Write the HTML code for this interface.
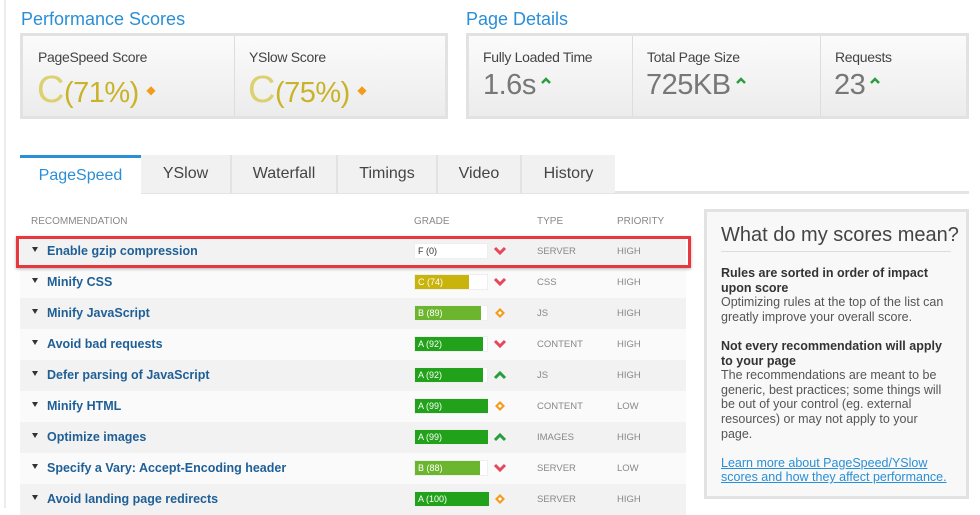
<!DOCTYPE html>
<html><head><meta charset="utf-8"><style>
*{box-sizing:border-box;margin:0;padding:0}
body{width:980px;height:508px;background:#fff;font-family:"Liberation Sans",sans-serif;position:relative;overflow:hidden;color:#444}
.abs{position:absolute}
.h{color:#2a8fd6;font-size:18px;top:9px}
.box{border:3px solid #e2e2e2;background:linear-gradient(#fbfbfb,#ececec);top:33px;height:86px}
.cell{position:absolute;top:0;bottom:0;border-left:1px solid #ddd}
.lab{position:absolute;top:13px;font-size:14px;color:#444;letter-spacing:-0.3px;white-space:nowrap}
.val{position:absolute;top:33px;font-size:29px;color:#777;letter-spacing:-0.5px;white-space:nowrap}
.tab{position:absolute;top:155px;height:38px;background:#f1f1f1;border-right:2px solid #e3e3e3;font-size:16px;color:#444;text-align:center;line-height:38px}
.row{position:absolute;left:20px;width:666px;height:31px}
.row .n{position:absolute;left:27px;top:8px;font-size:12.5px;font-weight:bold;color:#1f5f96}
.row .t{position:absolute;left:12px;top:11px;width:0;height:0;border-left:3px solid transparent;border-right:3px solid transparent;border-top:5px solid #333}
.g{position:absolute;left:394px;top:7px;width:74px;height:16px;background:#fff;border:1px solid #eee}
.g i{position:absolute;left:0;top:0;bottom:0;display:block}
.g span{position:absolute;left:3px;top:2px;font-size:9px;color:#fff;font-style:normal}
.ty,.pr{position:absolute;top:10px;font-size:9.5px;color:#888}
.ty{left:517px}.pr{left:597px}
.ic{position:absolute;left:473px;top:9px}
.side{font-size:12.5px;color:#555;line-height:14.6px}
.up{display:inline-block;vertical-align:10px;margin-left:4px}
</style></head><body>
<div class="abs" style="left:4px;top:0;width:2px;height:508px;background:#ececec"></div>
<div class="abs h" style="left:21px">Performance Scores</div>
<div class="abs h" style="left:466px">Page Details</div>
<div class="abs box" style="left:20px;width:428px">
 <div class="lab" style="left:15px">PageSpeed Score</div>
 <div class="val" style="left:14px;color:#c8b32a"><span style="font-size:38px;color:#dcd170">C</span>(71%) <span style="color:#f29b1d;font-size:12px;vertical-align:8px">◆</span></div>
 <div class="cell" style="left:211px"><div class="lab" style="left:14px">YSlow Score</div>
 <div class="val" style="left:13px;color:#c8b32a"><span style="font-size:38px;color:#dcd170">C</span>(75%) <span style="color:#f29b1d;font-size:12px;vertical-align:8px">◆</span></div></div>
</div>
<div class="abs box" style="left:466px;width:503px">
 <div class="lab" style="left:14px">Fully Loaded Time</div>
 <div class="val" style="left:14px">1.6s<svg class="up" width="12" height="8"><path d="M2 7l4-4 4 4" stroke="#2a9d3c" stroke-width="2.5" fill="none"/></svg></div>
 <div class="cell" style="left:163px"><div class="lab" style="left:14px">Total Page Size</div><div class="val" style="left:13px">725KB<svg class="up" width="12" height="8"><path d="M2 7l4-4 4 4" stroke="#2a9d3c" stroke-width="2.5" fill="none"/></svg></div></div>
 <div class="cell" style="left:351px"><div class="lab" style="left:14px">Requests</div><div class="val" style="left:13px">23<svg class="up" width="12" height="8"><path d="M2 7l4-4 4 4" stroke="#2a9d3c" stroke-width="2.5" fill="none"/></svg></div></div>
</div>
<div class="abs" style="left:20px;top:191px;width:949px;height:3px;background:#e5e5e5"></div>
<div class="tab" style="left:20px;width:121px;background:#fff;border-top:3px solid #2a8fd6;border-right:none;color:#2a8fd6;line-height:36px;height:40px">PageSpeed</div>
<div class="tab" style="left:141px;width:91px">YSlow</div>
<div class="tab" style="left:232px;width:106px">Waterfall</div>
<div class="tab" style="left:338px;width:100px">Timings</div>
<div class="tab" style="left:438px;width:84px">Video</div>
<div class="tab" style="left:522px;width:93px;border-right:none">History</div>
<div class="abs" style="left:31px;top:216px;font-size:10px;color:#888">RECOMMENDATION</div>
<div class="abs" style="left:414px;top:216px;font-size:10px;color:#888">GRADE</div>
<div class="abs" style="left:537px;top:216px;font-size:10px;color:#888">TYPE</div>
<div class="abs" style="left:617px;top:216px;font-size:10px;color:#888">PRIORITY</div>

<div class="row" style="top:236px;background:#f2f2f2"><b class="t"></b><span class="n">Enable gzip compression</span><div class="g"><span style="color:#333">F (0)</span></div><svg class="ic" width="14" height="12"><path d="M2 3l5 5 5-5" stroke="#e5485a" stroke-width="3" fill="none"/></svg><span class="ty">SERVER</span><span class="pr">HIGH</span></div>
<div class="row" style="top:267px;background:#fafafa"><b class="t"></b><span class="n">Minify CSS</span><div class="g"><i style="width:54px;background:#c9b40c"></i><span>C (74)</span></div><svg class="ic" width="14" height="12"><path d="M2 3l5 5 5-5" stroke="#e5485a" stroke-width="3" fill="none"/></svg><span class="ty">CSS</span><span class="pr">HIGH</span></div>
<div class="row" style="top:298px;background:#f2f2f2"><b class="t"></b><span class="n">Minify JavaScript</span><div class="g"><i style="width:66px;background:#6cb52e"></i><span>B (89)</span></div><svg class="ic" width="14" height="12"><path d="M7 1l5 5-5 5-5-5z" fill="#f29b1d"/><path d="M7 4l2 2-2 2-2-2z" fill="#fff"/></svg><span class="ty">JS</span><span class="pr">HIGH</span></div>
<div class="row" style="top:329px;background:#fafafa"><b class="t"></b><span class="n">Avoid bad requests</span><div class="g"><i style="width:68px;background:#22a21a"></i><span>A (92)</span></div><svg class="ic" width="14" height="12"><path d="M2 3l5 5 5-5" stroke="#e5485a" stroke-width="3" fill="none"/></svg><span class="ty">CONTENT</span><span class="pr">HIGH</span></div>
<div class="row" style="top:360px;background:#f2f2f2"><b class="t"></b><span class="n">Defer parsing of JavaScript</span><div class="g"><i style="width:68px;background:#22a21a"></i><span>A (92)</span></div><svg class="ic" width="14" height="12"><path d="M2 9l5-5 5 5" stroke="#2a9d3c" stroke-width="3" fill="none"/></svg><span class="ty">JS</span><span class="pr">HIGH</span></div>
<div class="row" style="top:391px;background:#fafafa"><b class="t"></b><span class="n">Minify HTML</span><div class="g"><i style="width:73px;background:#22a21a"></i><span>A (99)</span></div><svg class="ic" width="14" height="12"><path d="M7 1l5 5-5 5-5-5z" fill="#f29b1d"/><path d="M7 4l2 2-2 2-2-2z" fill="#fff"/></svg><span class="ty">CONTENT</span><span class="pr">LOW</span></div>
<div class="row" style="top:422px;background:#f2f2f2"><b class="t"></b><span class="n">Optimize images</span><div class="g"><i style="width:73px;background:#22a21a"></i><span>A (99)</span></div><svg class="ic" width="14" height="12"><path d="M2 9l5-5 5 5" stroke="#2a9d3c" stroke-width="3" fill="none"/></svg><span class="ty">IMAGES</span><span class="pr">HIGH</span></div>
<div class="row" style="top:453px;background:#fafafa"><b class="t"></b><span class="n">Specify a Vary: Accept-Encoding header</span><div class="g"><i style="width:65px;background:#6cb52e"></i><span>B (88)</span></div><svg class="ic" width="14" height="12"><path d="M2 3l5 5 5-5" stroke="#e5485a" stroke-width="3" fill="none"/></svg><span class="ty">SERVER</span><span class="pr">LOW</span></div>
<div class="row" style="top:484px;background:#f2f2f2"><b class="t"></b><span class="n">Avoid landing page redirects</span><div class="g"><i style="width:74px;background:#22a21a"></i><span>A (100)</span></div><svg class="ic" width="14" height="12"><path d="M7 1l5 5-5 5-5-5z" fill="#f29b1d"/><path d="M7 4l2 2-2 2-2-2z" fill="#fff"/></svg><span class="ty">SERVER</span><span class="pr">HIGH</span></div>

<div class="abs" style="left:16px;top:236px;width:675px;height:32px;border:3px solid #e8383f;box-shadow:0 1px 3px rgba(0,0,0,.3)"></div>

<div class="abs" style="left:704px;top:209px;width:265px;height:290px;border:3px solid #e2e2e2;background:#f8f8f8"></div>
<div class="abs" style="left:721px;top:224px;font-size:20px;color:#444;white-space:nowrap">What do my scores mean?</div>
<div class="abs" style="left:721px;top:251px;width:230px;height:1px;background:#ddd"></div>
<div class="abs side" style="left:721px;top:266px;width:228px">
<b style="color:#333">Rules are sorted in order of impact upon score</b><br>Optimizing rules at the top of the list can greatly improve your overall score.<br><br style="line-height:12px">
<b style="color:#333">Not every recommendation will apply to your page</b><br>The recommendations are meant to be generic, best practices; some things will be out of your control (eg. external resources) or may not apply to your page.<br><br style="line-height:12px">
<span style="color:#2a8fd6;text-decoration:underline">Learn more about PageSpeed/YSlow scores and how they affect performance.</span>
</div>
</body></html>
